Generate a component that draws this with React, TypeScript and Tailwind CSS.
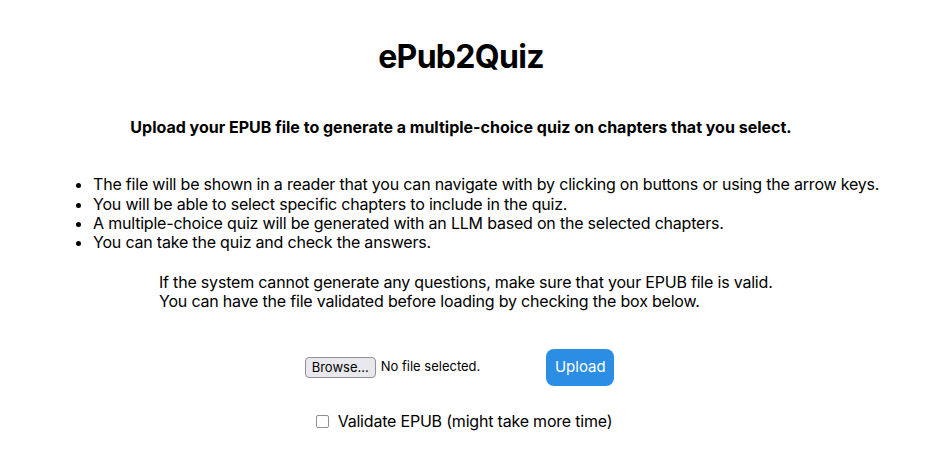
import { useState } from 'react';

const points = [
  'The file will be shown in a reader that you can navigate with by clicking on buttons or using the arrow keys.',
  'You will be able to select specific chapters to include in the quiz.',
  'A multiple-choice quiz will be generated with an LLM based on the selected chapters.',
  'You can take the quiz and check the answers.',
];

export default function App() {
  const [validate, setValidate] = useState(false);

  return (
    <div className="min-h-[468px] w-[922px] bg-white text-black font-['Inter','Liberation_Sans',sans-serif] text-[16px] leading-[1.21] tracking-[-0.2px]">
      <div className="flex flex-col items-center pt-[37px]">
        <h1 className="text-[32px] font-bold leading-[39px] tracking-[-0.7px]">ePub2Quiz</h1>
        <p className="mt-[42px] font-bold tracking-normal">
          Upload your EPUB file to generate a multiple-choice quiz on chapters that you select.
        </p>
      </div>

      <ul className="mt-[38px] ml-[53px] pl-[40px] list-disc">
        {points.map((p) => (
          <li key={p}>{p}</li>
        ))}
      </ul>

      <div className="mt-[20px] ml-[159px]">
        <p>If the system cannot generate any questions, make sure that your EPUB file is valid.</p>
        <p>You can have the file validated before loading by checking the box below.</p>
      </div>

      <div className="mt-[37px] mr-[3px] flex items-center justify-center gap-[66px]">
        <div className="flex items-center gap-[5px] text-[13px] tracking-normal">
          <button className="h-[21px] px-[6px] rounded-[4px] border border-[#8f8f9d] bg-[#e9e9ed] text-[13px] leading-none">
            Browse...
          </button>
          <span>No file selected.</span>
        </div>
        <button className="h-[37px] w-[68px] rounded-[8px] bg-[#2c8de4] text-white text-[15px] tracking-normal">
          Upload
        </button>
      </div>

      <label className="mt-[26px] ml-[6px] flex items-center justify-center gap-[9px]">
        <span
          onClick={() => setValidate(!validate)}
          className="h-[13px] w-[13px] rounded-[2px] border border-[#8f8f9d] bg-white flex items-center justify-center"
        >
          {validate && <span className="h-[7px] w-[7px] bg-[#2c8de4]" />}
        </span>
        <span>Validate EPUB (might take more time)</span>
      </label>
    </div>
  );
}
